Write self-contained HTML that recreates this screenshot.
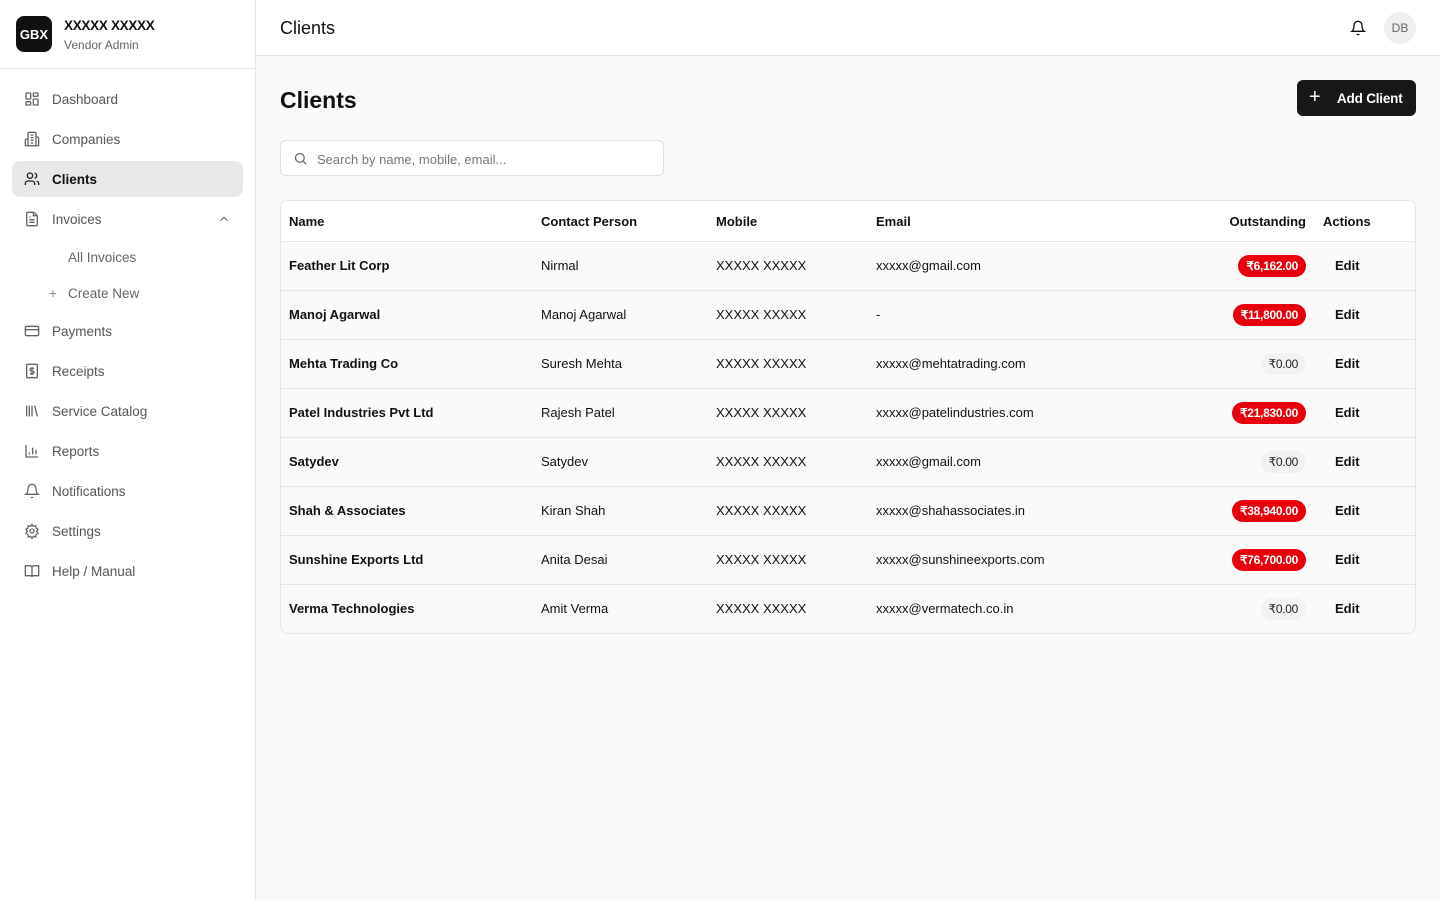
<!DOCTYPE html>
<html><head><meta charset="utf-8"><style>
*{box-sizing:border-box;margin:0;padding:0}
body{width:1440px;height:900px;font-family:"Liberation Sans",sans-serif;background:#fafafa;color:#111;position:relative;overflow:hidden;font-size:13px}
.side{position:absolute;left:0;top:0;width:256px;height:900px;background:#fff;border-right:1px solid #e5e5e5}
.brand{height:69px;border-bottom:1px solid #e5e5e5;position:relative}
.logo{position:absolute;left:16px;top:16px;width:36px;height:36px;border-radius:8px;background:#111;color:#fff;font-weight:bold;font-size:13px;display:flex;align-items:center;justify-content:center}
.bn{position:absolute;left:64px;top:18px;font-size:13.5px;font-weight:bold;letter-spacing:-0.3px}
.bs{position:absolute;left:64px;top:38px;font-size:12px;color:#666}
.nav{position:absolute;left:12px;width:231px;height:36px;border-radius:8px;display:flex;align-items:center;padding-left:40px;color:#555;font-size:13.5px}
.nav svg{position:absolute;left:12px;top:10px}
.nav.act{background:#e8e8e8;color:#111;font-weight:bold}
.top{position:absolute;left:256px;top:0;right:0;height:56px;background:#fff;border-bottom:1px solid #e5e5e5}
.av{position:absolute;right:24px;top:12px;width:32px;height:32px;border-radius:50%;background:#f0f0f0;color:#666;font-size:12px;display:flex;align-items:center;justify-content:center}
.btn{position:absolute;left:1297px;top:80px;width:119px;height:36px;border-radius:6px;background:#171717;color:#fff;font-weight:bold;font-size:13.5px;display:flex;align-items:center;padding-left:40px;letter-spacing:-0.2px}
.search{position:absolute;left:280px;top:140px;width:384px;height:36px;border:1px solid #e0e0e0;border-radius:6px;background:#fff;color:#777;font-size:13px;padding:11px 0 0 36px}
.tbl{position:absolute;left:280px;top:200px;width:1136px;height:434px;border:1px solid #e5e5e5;border-radius:8px;overflow:hidden;background:#fafafa}
.row{position:absolute;left:0;width:100%;height:49px;border-top:1px solid #e5e5e5}
.row span{position:absolute;top:16px;font-size:13px}
.h span{font-weight:bold;top:13px}
.c1{left:8px;font-weight:bold}.c2{left:260px}.c3{left:435px}.c4{left:595px}.c6{left:1054px;font-weight:bold}
.pill{position:absolute;right:109px;top:13px;height:22px;border-radius:11px;padding:0 8px;font-size:12px;line-height:22px;letter-spacing:-0.3px}
.red{background:#e7000b;color:#fff;font-weight:bold}.zero{background:#f2f2f2;color:#222}
</style></head><body>
<div class="side">
<div class="brand"><div class="logo">GBX</div><div class="bn">XXXXX XXXXX</div><div class="bs">Vendor Admin</div></div>
<div class="nav" style="top:81px"><svg width="16" height="16" viewBox="0 0 24 24" fill="none" stroke="#666" stroke-width="2"><rect x="3" y="3" width="7" height="9" rx="1"/><rect x="14" y="3" width="7" height="5" rx="1"/><rect x="14" y="12" width="7" height="9" rx="1"/><rect x="3" y="16" width="7" height="5" rx="1"/></svg>Dashboard</div>
<div class="nav" style="top:121px"><svg width="16" height="16" viewBox="0 0 24 24" fill="none" stroke="#666" stroke-width="2"><path d="M6 22V4a2 2 0 0 1 2-2h8a2 2 0 0 1 2 2v18zM6 12H4a2 2 0 0 0-2 2v8h4M18 9h2a2 2 0 0 1 2 2v11h-4M10 6h4M10 10h4M10 14h4M10 18h4"/></svg>Companies</div>
<div class="nav act" style="top:161px"><svg width="16" height="16" viewBox="0 0 24 24" fill="none" stroke="#222" stroke-width="2"><path d="M16 21v-2a4 4 0 0 0-4-4H6a4 4 0 0 0-4 4v2"/><circle cx="9" cy="7" r="4"/><path d="M22 21v-2a4 4 0 0 0-3-3.87M16 3.13a4 4 0 0 1 0 7.75"/></svg>Clients</div>
<div class="nav" style="top:201px"><svg width="16" height="16" viewBox="0 0 24 24" fill="none" stroke="#666" stroke-width="2"><path d="M15 2H6a2 2 0 0 0-2 2v16a2 2 0 0 0 2 2h12a2 2 0 0 0 2-2V7z"/><path d="M14 2v5h5M8 13h8M8 17h8M8 9h2"/></svg>Invoices<svg style="left:205px;top:11px" width="14" height="14" viewBox="0 0 24 24" fill="none" stroke="#666" stroke-width="2"><path d="m18 15-6-6-6 6"/></svg></div>
<div class="nav" style="top:239px;padding-left:56px;color:#666">All Invoices</div>
<div class="nav" style="top:275px;padding-left:56px;color:#666"><span style="position:absolute;left:37px;color:#888">+</span>Create New</div>
<div class="nav" style="top:313px"><svg width="16" height="16" viewBox="0 0 24 24" fill="none" stroke="#666" stroke-width="2"><rect x="2" y="5" width="20" height="14" rx="2"/><path d="M2 10h20"/></svg>Payments</div>
<div class="nav" style="top:353px"><svg width="16" height="16" viewBox="0 0 24 24" fill="none" stroke="#666" stroke-width="2"><rect x="4" y="2" width="16" height="20" rx="1"/><path d="M15 8h-4a2 2 0 0 0 0 4h2a2 2 0 0 1 0 4H9M12 6v12"/></svg>Receipts</div>
<div class="nav" style="top:393px"><svg width="16" height="16" viewBox="0 0 24 24" fill="none" stroke="#666" stroke-width="2"><path d="M4 4v16M8 4v16M12 4v16M16 4l4 16"/></svg>Service Catalog</div>
<div class="nav" style="top:433px"><svg width="16" height="16" viewBox="0 0 24 24" fill="none" stroke="#666" stroke-width="2"><path d="M3 3v18h18M8 17v-3M13 17V7M18 17v-7"/></svg>Reports</div>
<div class="nav" style="top:473px"><svg width="16" height="16" viewBox="0 0 24 24" fill="none" stroke="#666" stroke-width="2"><path d="M6 8a6 6 0 0 1 12 0c0 7 3 9 3 9H3s3-2 3-9M10.3 21a1.9 1.9 0 0 0 3.4 0"/></svg>Notifications</div>
<div class="nav" style="top:513px"><svg width="16" height="16" viewBox="0 0 24 24" fill="none" stroke="#666" stroke-width="2"><circle cx="12" cy="12" r="3"/><path d="M12 2l2 3 3.5-1 .5 3.5 3 2-2 3 2 3-3 2-.5 3.5-3.5-1-2 3-2-3-3.5 1-.5-3.5-3-2 2-3-2-3 3-2 .5-3.5 3.5 1z"/></svg>Settings</div>
<div class="nav" style="top:553px"><svg width="16" height="16" viewBox="0 0 24 24" fill="none" stroke="#666" stroke-width="2"><path d="M2 4h7a3 3 0 0 1 3 3v14a2 2 0 0 0-2-2H2zM22 4h-7a3 3 0 0 0-3 3v14a2 2 0 0 1 2-2h8z"/></svg>Help / Manual</div>
</div>
<div class="top"><div style="position:absolute;left:24px;top:18px;font-size:18px">Clients</div>
<svg style="position:absolute;right:74px;top:20px" width="16" height="16" viewBox="0 0 24 24" fill="none" stroke="#111" stroke-width="2"><path d="M6 8a6 6 0 0 1 12 0c0 7 3 9 3 9H3s3-2 3-9M10.3 21a1.9 1.9 0 0 0 3.4 0"/></svg>
<div class="av">DB</div></div>
<div style="position:absolute;left:280px;top:87px;font-size:23px;font-weight:bold">Clients</div>
<div class="btn"><span style="position:absolute;left:12px;top:6px;font-size:20px;font-weight:normal">+</span>Add Client</div>
<div class="search"><svg style="position:absolute;left:12px;top:10px" width="15" height="15" viewBox="0 0 24 24" fill="none" stroke="#666" stroke-width="2"><circle cx="11" cy="11" r="7"/><path d="m21 21-4.3-4.3"/></svg>Search by name, mobile, email...</div>
<div class="tbl">
<div class="row h" style="top:0;border-top:none;height:40px;background:#fff"><span class="c1">Name</span><span class="c2" style="font-weight:bold">Contact Person</span><span class="c3" style="font-weight:bold">Mobile</span><span class="c4" style="font-weight:bold">Email</span><span style="right:109px;font-weight:bold">Outstanding</span><span style="left:1042px;font-weight:bold">Actions</span></div>
<div class="row" style="top:40px"><span class="c1">Feather Lit Corp</span><span class="c2">Nirmal</span><span class="c3">XXXXX XXXXX</span><span class="c4">xxxxx@gmail.com</span><div class="pill red">₹6,162.00</div><span class="c6">Edit</span></div>
<div class="row" style="top:89px"><span class="c1">Manoj Agarwal</span><span class="c2">Manoj Agarwal</span><span class="c3">XXXXX XXXXX</span><span class="c4">-</span><div class="pill red">₹11,800.00</div><span class="c6">Edit</span></div>
<div class="row" style="top:138px"><span class="c1">Mehta Trading Co</span><span class="c2">Suresh Mehta</span><span class="c3">XXXXX XXXXX</span><span class="c4">xxxxx@mehtatrading.com</span><div class="pill zero">₹0.00</div><span class="c6">Edit</span></div>
<div class="row" style="top:187px"><span class="c1">Patel Industries Pvt Ltd</span><span class="c2">Rajesh Patel</span><span class="c3">XXXXX XXXXX</span><span class="c4">xxxxx@patelindustries.com</span><div class="pill red">₹21,830.00</div><span class="c6">Edit</span></div>
<div class="row" style="top:236px"><span class="c1">Satydev</span><span class="c2">Satydev</span><span class="c3">XXXXX XXXXX</span><span class="c4">xxxxx@gmail.com</span><div class="pill zero">₹0.00</div><span class="c6">Edit</span></div>
<div class="row" style="top:285px"><span class="c1">Shah &amp; Associates</span><span class="c2">Kiran Shah</span><span class="c3">XXXXX XXXXX</span><span class="c4">xxxxx@shahassociates.in</span><div class="pill red">₹38,940.00</div><span class="c6">Edit</span></div>
<div class="row" style="top:334px"><span class="c1">Sunshine Exports Ltd</span><span class="c2">Anita Desai</span><span class="c3">XXXXX XXXXX</span><span class="c4">xxxxx@sunshineexports.com</span><div class="pill red">₹76,700.00</div><span class="c6">Edit</span></div>
<div class="row" style="top:383px"><span class="c1">Verma Technologies</span><span class="c2">Amit Verma</span><span class="c3">XXXXX XXXXX</span><span class="c4">xxxxx@vermatech.co.in</span><div class="pill zero">₹0.00</div><span class="c6">Edit</span></div>
</div>
</body></html>
